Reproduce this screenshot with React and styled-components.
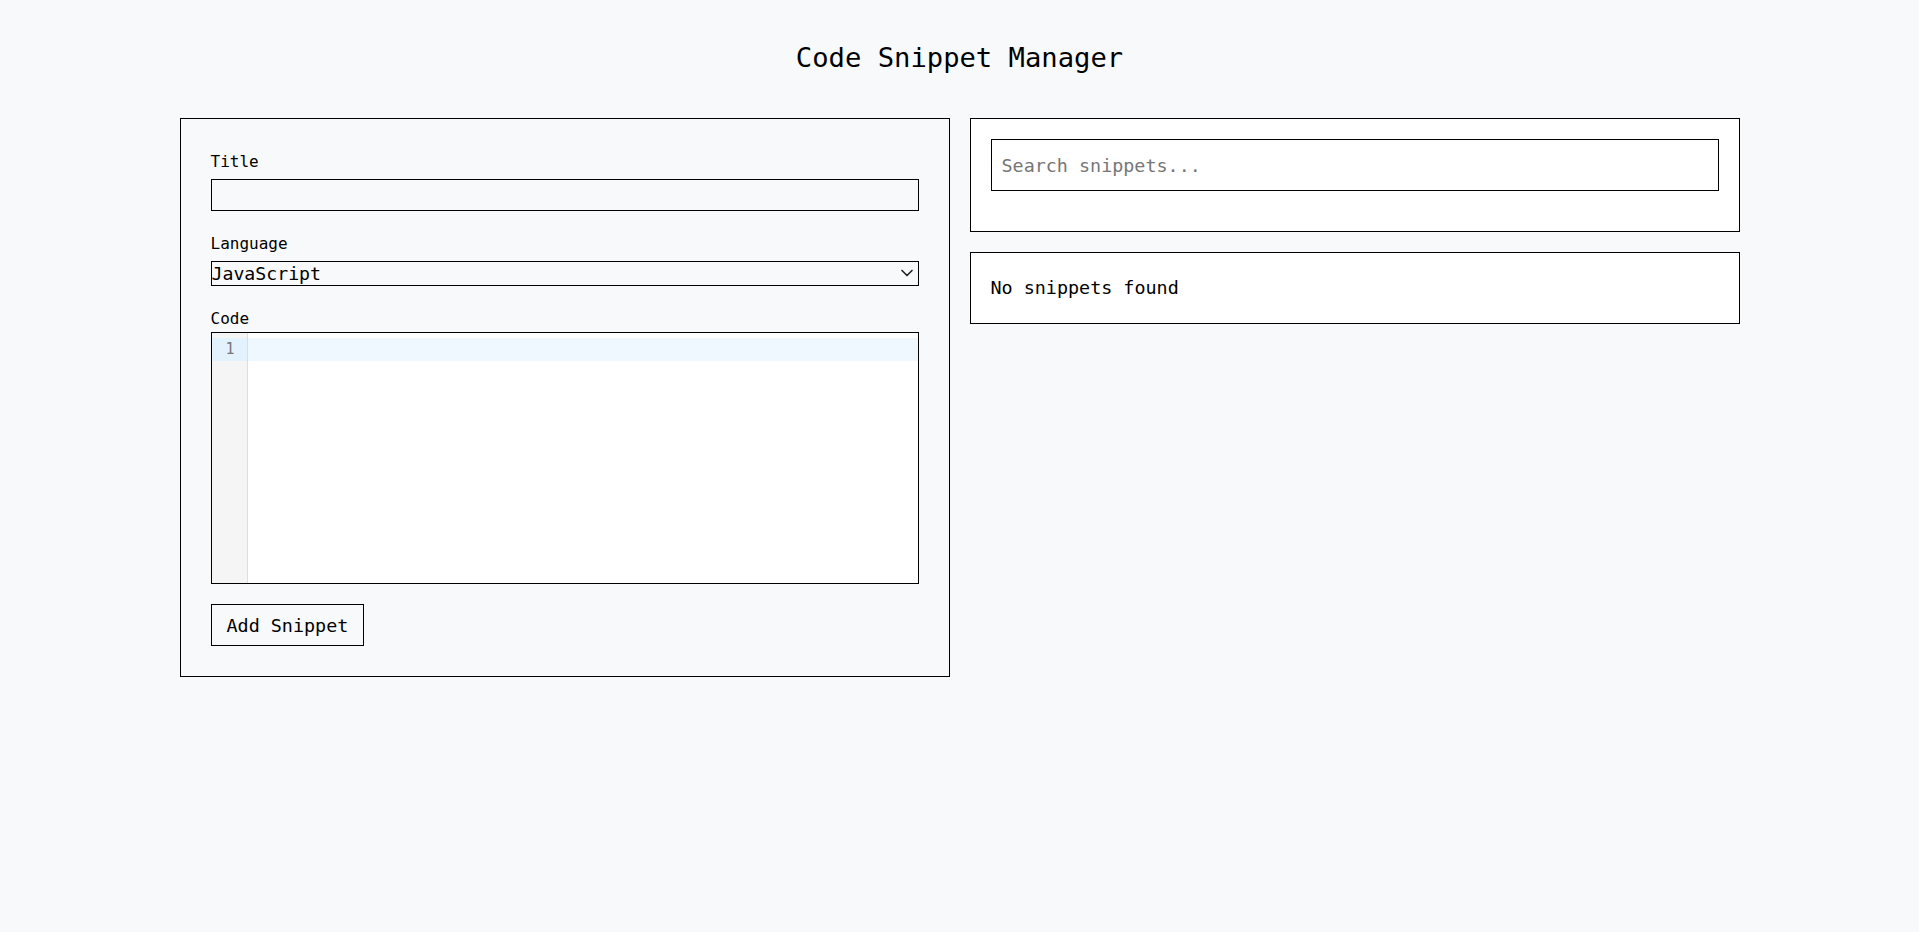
import styled, { createGlobalStyle } from "styled-components";
import { ChevronDown } from "lucide-react";

const GlobalStyle = createGlobalStyle`
    body {
        margin: 0;
        background-color: #f8f9fa;
        font-family: "DejaVu Sans Mono", "Liberation Mono", monospace;
        color: #000;
    }
`

const Page = styled.div`
    min-height: 100vh;
    padding: 0 20px;
    box-sizing: border-box;
`

const Heading = styled.h1`
    margin: 42px 0 44px;
    font-size: 27.2px;
    line-height: 32px;
    font-weight: normal;
    text-align: center;
`

const Layout = styled.div`
    max-width: 1560px;
    margin: 0 auto;
    display: grid;
    grid-template-columns: 1fr 1fr;
    gap: 20px;
    align-items: start;
`

const FormPanel = styled.div`
    border: 1px solid #000;
    padding: 34px 30px 30px;
`

const Field = styled.div`
    margin-bottom: 24px;
`

const Label = styled.label`
    display: block;
    font-size: 16px;
    line-height: 18px;
    margin-bottom: ${({ $gap = 8 }) => $gap}px;
`

const TextInput = styled.input`
    display: block;
    width: 100%;
    height: 32px;
    box-sizing: border-box;
    border: 1px solid #000;
    border-radius: 0;
    background: transparent;
    padding: 0 4px;
    font: inherit;
    font-size: 16px;
    outline: none;
`

const SelectWrap = styled.div`
    position: relative;
`

const Select = styled.select`
    display: block;
    width: 100%;
    height: 25px;
    box-sizing: border-box;
    appearance: none;
    border: 1px solid #000;
    border-radius: 0;
    background: transparent;
    padding: 0 24px 0 0;
    font-family: inherit;
    font-size: 18.2px;
    color: #000;
    outline: none;
`

const Chevron = styled(ChevronDown)`
    position: absolute;
    right: 2px;
    top: 2px;
    pointer-events: none;
    color: #222;
`

const Editor = styled.div`
    display: flex;
    height: 252px;
    box-sizing: border-box;
    border: 1px solid #000;
    background: #fff;
`

const Gutter = styled.div`
    width: 35px;
    flex-shrink: 0;
    background: #f5f5f5;
    border-right: 1px solid #ddd;
    padding-top: 5px;
`

const LineNumber = styled.div`
    height: 23px;
    line-height: 23px;
    padding-right: 12px;
    text-align: right;
    font-size: 15px;
    color: #777;
    background: ${({ $active }) => ($active ? "#e2f2ff" : "transparent")};
`

const Content = styled.div`
    flex: 1;
    padding-top: 5px;
`

const CodeLine = styled.div`
    height: 23px;
    background: ${({ $active }) => ($active ? "#f0f8ff" : "transparent")};
`

const Button = styled.button`
    margin-top: 20px;
    height: 42px;
    padding: 0 15px;
    border: 1px solid #000;
    border-radius: 0;
    background: transparent;
    font-family: inherit;
    font-size: 18.4px;
    color: #000;
    cursor: pointer;
`

const Column = styled.div`
    display: flex;
    flex-direction: column;
    gap: 20px;
`

const Card = styled.div`
    border: 1px solid #000;
    background: #fff;
    padding: 20px;
`

const SearchInput = styled.input`
    display: block;
    width: 100%;
    height: 52px;
    margin-bottom: 20px;
    box-sizing: border-box;
    border: 1px solid #000;
    border-radius: 0;
    background: #fff;
    padding: 0 10px;
    font-family: inherit;
    font-size: 18.4px;
    outline: none;

    &::placeholder {
        color: #767676;
    }
`

const Empty = styled.p`
    margin: 0;
    font-size: 18.4px;
    line-height: 30px;
`

const App = () => {
    return (
        <Page>
            <GlobalStyle />
            <Heading>Code Snippet Manager</Heading>
            <Layout>
                <FormPanel>
                    <Field>
                        <Label htmlFor="title">Title</Label>
                        <TextInput id="title" type="text" />
                    </Field>
                    <Field>
                        <Label htmlFor="language">Language</Label>
                        <SelectWrap>
                            <Select id="language" defaultValue="javascript">
                                <option value="javascript">JavaScript</option>
                                <option value="python">Python</option>
                                <option value="html">HTML</option>
                                <option value="css">CSS</option>
                            </Select>
                            <Chevron size={20} strokeWidth={2} />
                        </SelectWrap>
                    </Field>
                    <Label $gap={4}>Code</Label>
                    <Editor>
                        <Gutter>
                            <LineNumber $active>1</LineNumber>
                        </Gutter>
                        <Content>
                            <CodeLine $active />
                        </Content>
                    </Editor>
                    <Button type="button">Add Snippet</Button>
                </FormPanel>
                <Column>
                    <Card>
                        <SearchInput type="text" placeholder="Search snippets..." />
                    </Card>
                    <Card>
                        <Empty>No snippets found</Empty>
                    </Card>
                </Column>
            </Layout>
        </Page>
    )
}

export default App;
